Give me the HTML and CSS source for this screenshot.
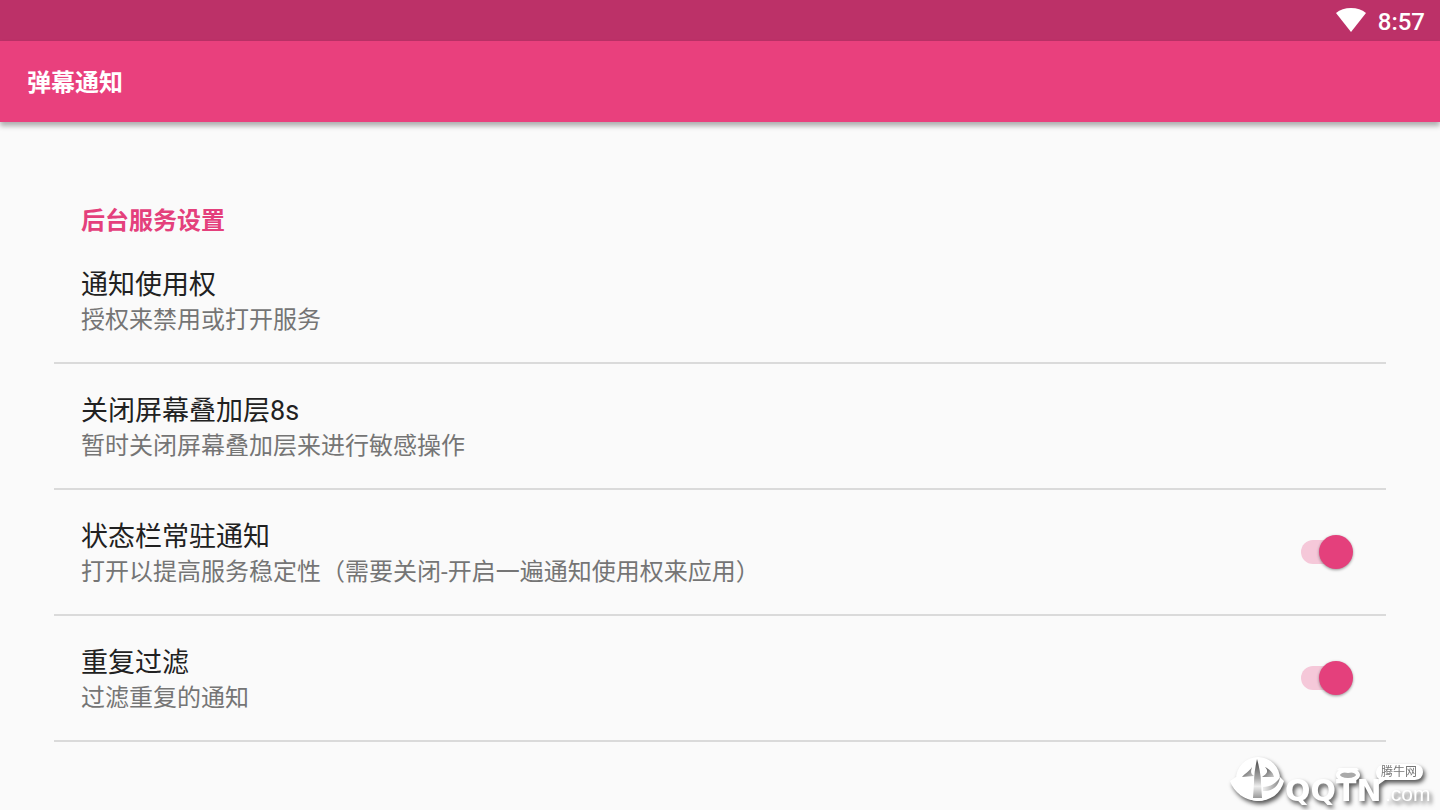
FILE: index.html
```html
<!DOCTYPE html>
<html lang="zh-CN">
<head>
  <meta charset="utf-8"/>
  <meta content="width=device-width, initial-scale=1.0" name="viewport"/>
  <title>弹幕通知</title>
  <link rel="stylesheet" href="styles.css">
</head>
<body>
  <div class="status-bar">
    <svg class="wifi" viewBox="0 0 30 24" aria-hidden="true">
      <path d="M15 24 L0 5 Q6 0 15 0 Q24 0 30 5 Z" fill="#fff"/>
    </svg>
    <span class="clock">8:57</span>
  </div>
  <header class="app-bar">
    <h1>弹幕通知</h1>
  </header>

  <main class="settings">
    <h2>后台服务设置</h2>
    <button class="row" type="button">
      <span class="text">
        <span class="title">通知使用权</span>
        <span class="summary">授权来禁用或打开服务</span>
      </span>
    </button>
    <button class="row" type="button">
      <span class="text">
        <span class="title">关闭屏幕叠加层8s</span>
        <span class="summary">暂时关闭屏幕叠加层来进行敏感操作</span>
      </span>
    </button>
    <label class="row" for="keepNotice">
      <span class="text">
        <span class="title">状态栏常驻通知</span>
        <span class="summary">打开以提高服务稳定性（需要关闭-开启一遍通知使用权来应用）</span>
      </span>
      <input class="switch" id="keepNotice" type="checkbox" checked>
    </label>
    <label class="row" for="filterRepeat">
      <span class="text">
        <span class="title">重复过滤</span>
        <span class="summary">过滤重复的通知</span>
      </span>
      <input class="switch" id="filterRepeat" type="checkbox" checked>
    </label>
  </main>

  <!-- site mark over the bottom right corner -->
  <svg class="watermark" viewBox="0 0 220 70" aria-label="QQTN.com 腾牛网">
    <defs>
      <linearGradient id="cut" x1="0" y1="0" x2="1" y2="1">
        <stop offset="0" stop-color="#444"/>
        <stop offset="1" stop-color="#ccc"/>
      </linearGradient>
      <linearGradient id="stem" x1="0" y1="0" x2="0" y2="1">
        <stop offset="0" stop-color="#444"/>
        <stop offset="0.5" stop-color="#aaa"/>
        <stop offset="0.7" stop-color="#eee"/>
        <stop offset="1" stop-color="#999"/>
      </linearGradient>
      <linearGradient id="rim" x1="0" y1="0" x2="1" y2="0">
        <stop offset="0" stop-color="#eee"/>
        <stop offset="1" stop-color="#888"/>
      </linearGradient>
    </defs>
    <g class="mark">
      <circle cx="38" cy="39" r="22" fill="#fff"/>
      <path d="M16 37 L10 41 C14 53 25 60 37 61 C50 61 61 54 64 41 L60 37 Z" fill="#fff"/>
      <ellipse cx="128" cy="35" rx="10" ry="5" fill="#aaa" stroke="#fff" stroke-width="4"/>
      <path d="M117 30 Q128 36 139 30 L137 28 H119 Z" fill="#fff"/>
      <path d="M165 24 H195 Q203 25 203 32 Q203 39 195 40 H165 L158 45 L159 39 Q156 37 156 32 Q157 25 165 24 Z" fill="#fff"/>
      <text class="brand" x="65" y="61">QQTN</text>
      <text class="domain" x="165" y="61">.com</text>
    </g>
    <path d="M37 19 C35 28 34 35 34 43 L33 58 H42 L41 43 C41 35 39 26 37 19 Z" fill="url(#stem)"/>
    <path d="M32 27 C29 32 25 33 22 37 L34 36 C30 33 31 31 32 27 Z" fill="url(#cut)"/>
    <path d="M42 37 H54 C53 32 49 29 45 27 C49 31 47 34 42 37 Z" fill="url(#cut)"/>
    <path d="M43 47 C50 47 57 43 60 37 C59 46 52 52 43 51 Z" fill="url(#rim)"/>
    <text class="site" x="161" y="36">腾牛网</text>
  </svg>
</body>
</html>
```
FILE: styles.css
```css
* {
  box-sizing: border-box;
}
body {
  margin: 0;
  min-height: 100vh;
  font-family: Roboto, "Noto Sans CJK SC", sans-serif;
  background-color: #fafafa;
  color: #212121;
}
.status-bar {
  display: flex;
  align-items: center;
  justify-content: flex-end;
  gap: 12px;
  height: 41px;
  padding: 0 15px 1px;
  background-color: #bc3168;
  color: #fff;
}
.wifi {
  width: 30px;
  height: 24px;
}
.clock {
  font-size: 24px;
  font-weight: 500;
  line-height: 28px;
  padding-top: 3px;
}
.app-bar {
  display: flex;
  align-items: center;
  height: 81px;
  padding: 2px 27px 0;
  background-color: #e9407d;
  box-shadow: 0 4px 5px rgba(0, 0, 0, 0.3);
}
h1, h2 {
  margin: 0;
  font-size: 24px;
  font-weight: 700;
  line-height: 34px;
}
h1 {
  color: #fff;
}
.settings {
  padding: 82px 54px 40px;
}
h2 {
  padding: 0 27px;
  color: #e4407c;
}
.row {
  display: flex;
  align-items: center;
  justify-content: space-between;
  width: 100%;
  padding: 0 27px;
  border: none;
  border-bottom: 2px solid #dadada;
  background: none;
  color: inherit;
  font-family: inherit;
  text-align: left;
  cursor: pointer;
}
.text {
  display: flex;
  flex-direction: column;
  padding: 29px 0 24px;
}
.title {
  font-size: 27px;
  line-height: 36px;
}
.summary {
  font-size: 24px;
  line-height: 35px;
  color: #757575;
}
.switch {
  appearance: none;
  display: flex;
  align-items: center;
  flex-shrink: 0;
  width: 48px;
  height: 24px;
  margin: 0 10px 0 0;
  border-radius: 12px;
  background-color: #bdbdbd;
  cursor: pointer;
}
.switch::before {
  content: "";
  width: 34px;
  height: 34px;
  flex-shrink: 0;
  border-radius: 50%;
  background-color: #fafafa;
  box-shadow: 0 1px 3px rgba(0, 0, 0, 0.4);
}
.switch:checked {
  justify-content: flex-end;
  background-color: #f5c8d9;
}
.switch:checked::before {
  margin-right: -4px;
  background-color: #e4407c;
}
.watermark {
  position: fixed;
  right: 0;
  bottom: 0;
  width: 220px;
  height: 70px;
  pointer-events: none;
}
.mark {
  filter: drop-shadow(2px 3px 2px rgba(0, 0, 0, 0.65));
}
.brand {
  font-family: "DejaVu Sans", sans-serif;
  font-size: 30px;
  font-weight: 700;
  fill: #fff;
}
.domain {
  font-family: "Liberation Sans", sans-serif;
  font-size: 21px;
  fill: #fff;
}
.site {
  font-family: "Noto Sans CJK SC", sans-serif;
  font-size: 12px;
  fill: #777;
}
```
